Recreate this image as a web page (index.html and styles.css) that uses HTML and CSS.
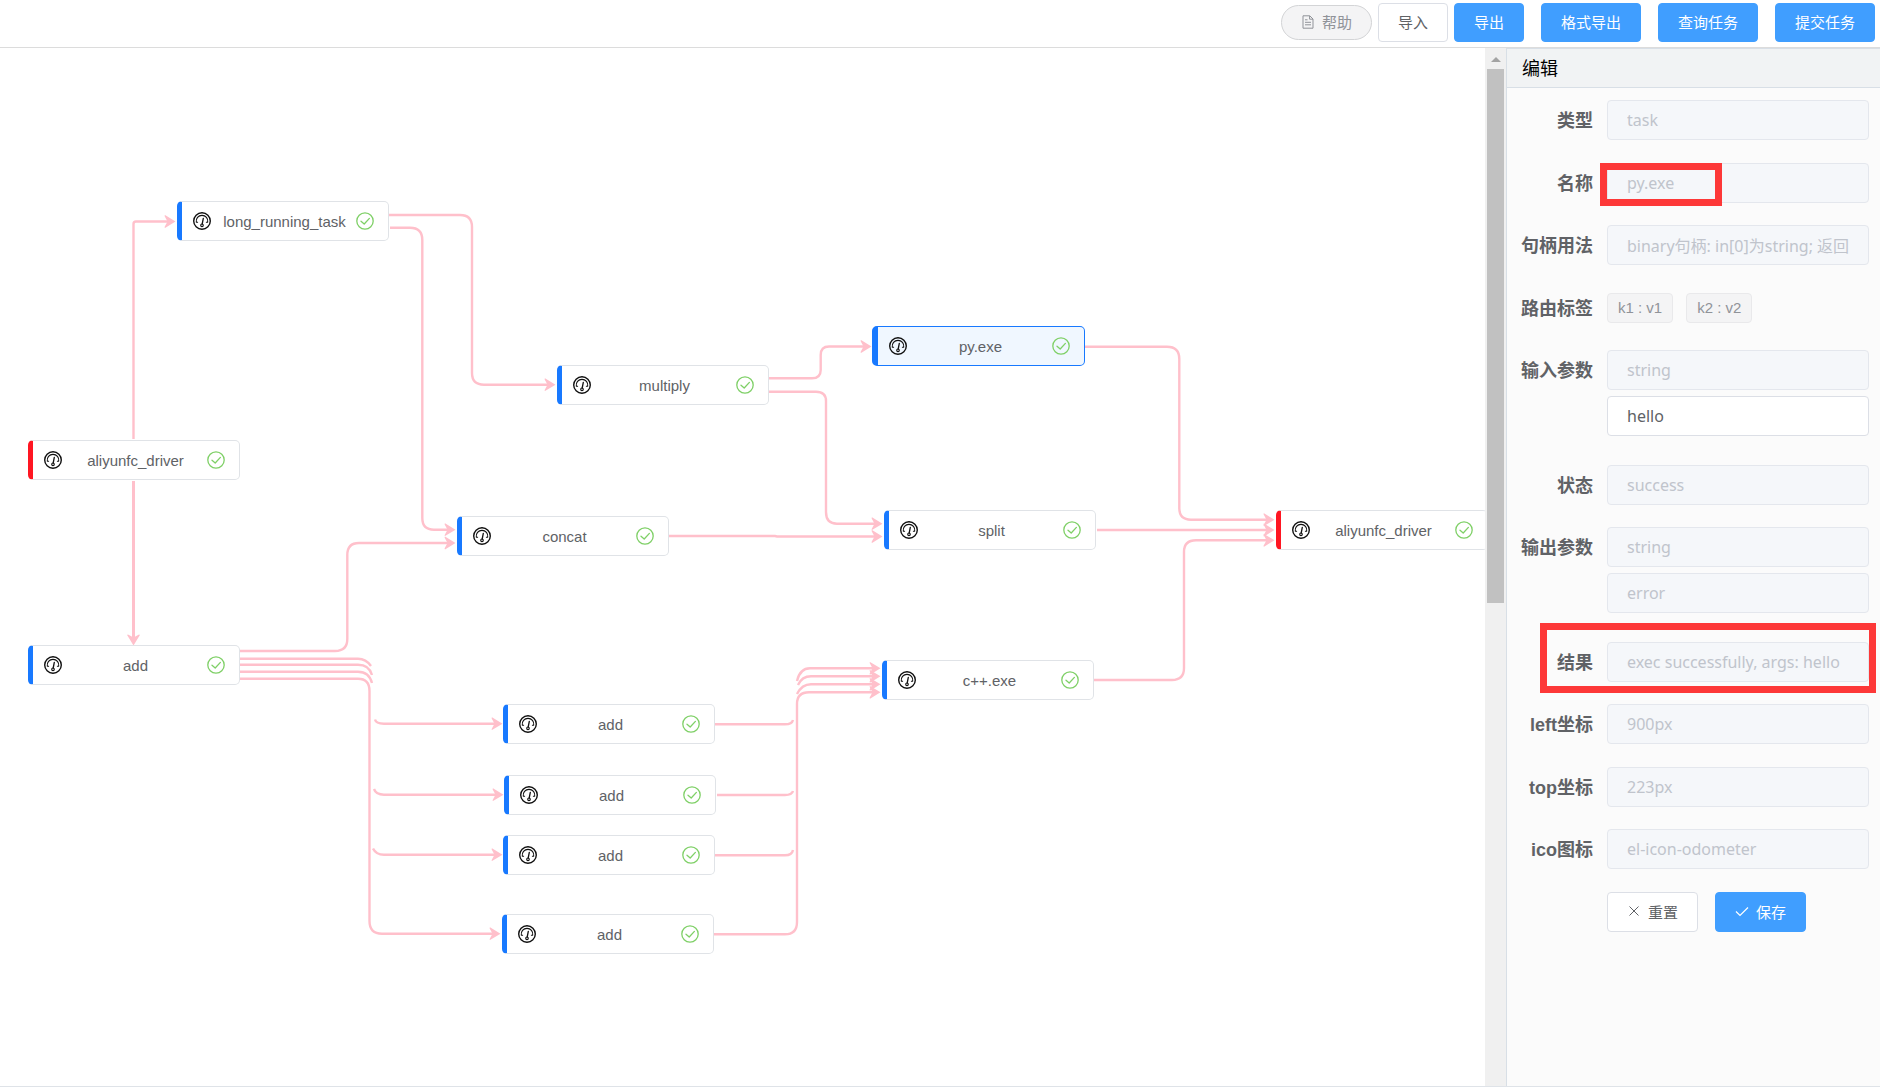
FILE: index.html
```html
<!DOCTYPE html>
<html lang="zh-CN">
<head>
<meta charset="utf-8">
<title>流程编辑</title>
<link rel="stylesheet" href="styles.css">
</head>
<body>
<svg class="defs" aria-hidden="true">
  <symbol id="odometer" viewBox="0 0 18 18">
    <g fill="none" stroke="#111" stroke-linecap="round" stroke-linejoin="round">
      <circle cx="9" cy="9" r="8.3" stroke-width="1.4"/>
      <path d="M4.6 10.2H3.3A5.8 5.8 0 1 1 14.7 10.2H13.4" stroke-width="1.1"/>
      <path d="M10.3 6.4L9.2 12" stroke-width="1.3"/>
      <circle cx="9" cy="13.3" r="1.3" stroke-width="1.1"/>
    </g>
  </symbol>
  <symbol id="done" viewBox="0 0 18 18">
    <g fill="none" stroke="#7fd067" stroke-width="1.3" stroke-linecap="round" stroke-linejoin="round">
      <circle cx="9" cy="9" r="8.2"/>
      <path d="M5 9.2L8.2 12L13.4 6.4"/>
    </g>
  </symbol>
</svg>

<header class="toolbar">
  <div class="toolbar-main">
    <button type="button" class="btn btn-help">
      <svg class="doc-icon" viewBox="0 0 14 14" fill="none" stroke="currentColor" stroke-width="1"><path d="M2 .8H8.8L12 4V13.2H2ZM8.6 1V4.2H12M4 4.8H6.5M4 7.3H10M4 9.8H10"/></svg>
      <span>帮助</span>
    </button>
    <button type="button" class="btn">导入</button>
    <button type="button" class="btn btn-primary">导出</button>
  </div>
  <button type="button" class="btn btn-primary">格式导出</button>
  <button type="button" class="btn btn-primary">查询任务</button>
  <button type="button" class="btn btn-primary">提交任务</button>
</header>

<main class="workspace">
  <section class="canvas">
    <svg class="links" aria-hidden="true">
      <defs>
        <marker id="arrow" markerUnits="userSpaceOnUse" markerWidth="12" markerHeight="14" refX="4" refY="7" orient="auto">
          <path d="M11.5 7L1 13.4Q.2 12.8 .8 12L3.5 7L.8 2Q.2 1.2 1 .6Z" fill="#ffc0cb"/>
        </marker>
      </defs>
      <g stroke-width="2.4">
        <path class="arrow" d="M133.5 391V176Q133.5 173.5 136 173.5H168"/>
        <path class="arrow" stroke-width="3" d="M133.5 433V590"/>
        <path class="arrow" d="M389 167H460Q472 167 472 179V325Q472 336.7 484 336.7H548"/>
        <path class="arrow" d="M390 179.7H410Q422.3 179.7 422.3 192V470Q422.3 481.7 434 481.7H448"/>
        <path class="arrow" d="M240 603H335Q347.3 603 347.3 591V507Q347.3 495 359 495H448"/>
        <path class="arrow" d="M769 330.3H812Q820.7 330.3 820.7 322V307Q820.7 298.5 829 298.5H864"/>
        <path class="arrow" d="M769 343.7H816Q826 343.7 826 353V464Q826 475.7 837 475.7H875"/>
        <path class="arrow" d="M669 488H775L777 488.5H875"/>
        <path class="arrow" d="M1085 298.7H1167Q1179.3 298.7 1179.3 311V460Q1179.3 471.7 1191 471.7H1267"/>
        <path class="arrow" d="M1097 482H1267"/>
        <path class="arrow" d="M1094 632H1172Q1184 632 1184 620V504Q1184 492.3 1196 492.3H1267"/>
        <path d="M240 610.7H358Q366 610.7 371 618"/>
        <path d="M240 616.7H358Q369 616.7 372 627"/>
        <path d="M240 623.7H358Q369 623.7 372 635"/>
        <path class="arrow" d="M240 630.7H358Q369.5 630.7 369.5 643V873Q369.5 885.7 382 885.7H493"/>
        <path class="arrow" d="M375 671.5Q376 675.7 384 675.7H495"/>
        <path class="arrow" d="M374 741Q376 746.7 384 746.7H496"/>
        <path class="arrow" d="M373 800.5Q376 806.7 384 806.7H495"/>
        <path d="M715 676.3H785Q792 676.3 793 672"/>
        <path d="M717 747H785Q792 747 793 743"/>
        <path d="M715 807.3H785Q792 807.3 793 802"/>
        <path class="arrow" d="M714 886.3H785Q797 886.3 797 874V656Q797 644.3 809 644.3H873"/>
        <path class="arrow" d="M797 633Q800 620.3 810 620.3H873"/>
        <path class="arrow" d="M798 637Q802 628.3 811 628.3H873"/>
        <path class="arrow" d="M797 646Q802 636.3 811 636.3H873"/>
      </g>
    </svg>

    <div class="node" style="left:177px;top:153px"><svg><use href="#odometer"/></svg><span>long_running_task</span><svg><use href="#done"/></svg></div>
    <div class="node" style="left:557px;top:317px"><svg><use href="#odometer"/></svg><span>multiply</span><svg><use href="#done"/></svg></div>
    <div class="node node-active" style="left:872px;top:278px"><svg><use href="#odometer"/></svg><span>py.exe</span><svg><use href="#done"/></svg></div>
    <div class="node node-driver" style="left:28px;top:392px"><svg><use href="#odometer"/></svg><span>aliyunfc_driver</span><svg><use href="#done"/></svg></div>
    <div class="node" style="left:457px;top:468px"><svg><use href="#odometer"/></svg><span>concat</span><svg><use href="#done"/></svg></div>
    <div class="node" style="left:884px;top:462px"><svg><use href="#odometer"/></svg><span>split</span><svg><use href="#done"/></svg></div>
    <div class="node node-driver" style="left:1276px;top:462px"><svg><use href="#odometer"/></svg><span>aliyunfc_driver</span><svg><use href="#done"/></svg></div>
    <div class="node" style="left:28px;top:597px"><svg><use href="#odometer"/></svg><span>add</span><svg><use href="#done"/></svg></div>
    <div class="node" style="left:882px;top:612px"><svg><use href="#odometer"/></svg><span>c++.exe</span><svg><use href="#done"/></svg></div>
    <div class="node" style="left:503px;top:656px"><svg><use href="#odometer"/></svg><span>add</span><svg><use href="#done"/></svg></div>
    <div class="node" style="left:504px;top:727px"><svg><use href="#odometer"/></svg><span>add</span><svg><use href="#done"/></svg></div>
    <div class="node" style="left:503px;top:787px"><svg><use href="#odometer"/></svg><span>add</span><svg><use href="#done"/></svg></div>
    <div class="node" style="left:502px;top:866px"><svg><use href="#odometer"/></svg><span>add</span><svg><use href="#done"/></svg></div>
  </section>

  <div class="scrollbar" aria-hidden="true">
    <svg class="scroll-up" viewBox="0 0 10 5"><path d="M0 5L5 0L10 5Z" fill="#a3a3a3"/></svg>
    <div class="scroll-thumb"></div>
  </div>

  <aside class="panel">
    <h2 class="panel-title">编辑</h2>
    <form class="form">
      <div class="row"><label for="type">类型</label><div class="field"><input id="type" value="task" disabled></div></div>
      <div class="row"><label for="name">名称</label><div class="field"><input id="name" value="py.exe" disabled><i class="mark mark-name"></i></div></div>
      <div class="row"><label for="usage">句柄用法</label><div class="field"><input id="usage" value="binary句柄: in[0]为string; 返回值为string" disabled></div></div>
      <div class="row"><span class="label">路由标签</span><div class="field tags"><span class="tag">k1 : v1</span><span class="tag">k2 : v2</span></div></div>
      <div class="row row-multi"><label for="in-type">输入参数</label><div class="field"><input id="in-type" value="string" disabled><input value="hello" aria-label="输入参数值"></div></div>
      <div class="row"><label for="status">状态</label><div class="field"><input id="status" value="success" disabled></div></div>
      <div class="row row-multi"><label for="out-type">输出参数</label><div class="field"><input id="out-type" value="string" disabled><input value="error" aria-label="输出参数错误" disabled></div></div>
      <div class="row"><label for="result">结果</label><div class="field"><input id="result" value="exec successfully, args: hello" disabled></div><i class="mark mark-result"></i></div>
      <div class="row"><label for="left">left坐标</label><div class="field"><input id="left" value="900px" disabled></div></div>
      <div class="row"><label for="top">top坐标</label><div class="field"><input id="top" value="223px" disabled></div></div>
      <div class="row"><label for="ico">ico图标</label><div class="field"><input id="ico" value="el-icon-odometer" disabled></div></div>
      <div class="actions">
        <button type="reset" class="btn"><svg viewBox="0 0 14 14" fill="none" stroke="currentColor"><path d="M2.5 2.5L11.5 11.5M11.5 2.5L2.5 11.5"/></svg><span>重置</span></button>
        <button type="button" class="btn btn-primary"><svg viewBox="0 0 14 14" fill="none" stroke="currentColor" stroke-width="1.2"><path d="M1 7.5L5 11.5L13 3.5"/></svg><span>保存</span></button>
      </div>
    </form>
  </aside>
</main>
</body>
</html>
```
FILE: styles.css
```css
* {
  box-sizing: border-box;
}

body {
  margin: 0;
  min-height: 100vh;
  display: flex;
  flex-direction: column;
  background: #fff;
  color: #606266;
  font-family: "Liberation Sans", "Noto Sans CJK SC", sans-serif;
  font-size: 15px;
}

.defs {
  display: none;
}

/* Toolbar */
.toolbar {
  display: flex;
  justify-content: flex-end;
  align-items: center;
  gap: 17px;
  padding: 3px 5px 5px;
  border-bottom: 1px solid #dcdcdc;
}

.toolbar-main {
  display: flex;
  align-items: center;
  gap: 6px;
}

.btn {
  display: flex;
  align-items: center;
  justify-content: center;
  height: 39px;
  padding: 0 19px 2px;
  border: 1px solid #dcdfe6;
  border-radius: 4px;
  background: #fff;
  color: #606266;
  font: inherit;
  white-space: nowrap;
}

.btn svg {
  width: 14px;
  height: 14px;
}

.btn-primary {
  border-color: #409eff;
  background: #409eff;
  color: #fff;
}

.btn-help {
  gap: 7px;
  height: 35px;
  border-color: #d3d4d6;
  border-radius: 18px;
  background: #f4f4f5;
  color: #909399;
}

/* Workspace */
.workspace {
  flex: 1;
  display: flex;
  border-bottom: 1px solid #dfe3e8;
}

.canvas {
  flex: 1;
  position: relative;
  overflow: hidden;
}

.links {
  position: absolute;
  inset: 0;
  width: 100%;
  height: 100%;
  fill: none;
  stroke: #ffc0cb;
}

.links marker path {
  stroke: none;
}

.arrow {
  marker-end: url(#arrow);
}

.node {
  position: absolute;
  display: flex;
  align-items: center;
  width: 212px;
  height: 40px;
  padding: 0 14px 0 11px;
  border: 1px solid #e0e3e7;
  border-left: 5px solid #1879ff;
  border-radius: 5px;
  background: #fff;
}

.node svg {
  width: 18px;
  height: 18px;
}

.node span {
  flex: 1;
  padding-left: 2px;
  text-align: center;
}

.node-driver {
  border-left-color: #ff1622;
}

.node-active {
  width: 213px;
  border-color: #1879ff;
  border-left-width: 6px;
  background: #f0f7ff;
}

/* Canvas scrollbar */
.scrollbar {
  display: flex;
  flex-direction: column;
  align-items: center;
  gap: 7px;
  width: 21px;
  padding-top: 9px;
  background: #f0f0f0;
}

.scroll-up {
  width: 10px;
  height: 5px;
}

.scroll-thumb {
  width: 17px;
  height: 534px;
  background: #c1c1c1;
}

/* Edit panel */
.panel {
  width: 374px;
  border-left: 1px solid #d8dfe6;
  background: #fbfbfb;
}

.panel-title {
  margin: 0;
  padding: 2px 0 0 15px;
  border-top: 1px solid #d8dfe6;
  border-bottom: 1px solid #d8dfe6;
  background: #f1f3f4;
  color: #000;
  font-size: 18px;
  font-weight: 400;
  line-height: 36px;
}

.form {
  padding: 12px 11px 12px 0;
}

.row {
  position: relative;
  display: flex;
  margin-bottom: 22px;
}

.row:nth-child(odd) {
  margin-bottom: 23px;
}

.row-multi {
  padding-bottom: 6px;
}

.row label,
.row .label {
  width: 100px;
  height: 40px;
  padding: 1px 14px 0 0;
  font-size: 18px;
  font-weight: 700;
  line-height: 40px;
  text-align: right;
  white-space: nowrap;
}

.field {
  position: relative;
  flex: 1;
  display: flex;
  flex-direction: column;
  gap: 6px;
  min-width: 0;
}

.field input {
  width: 100%;
  height: 40px;
  padding: 0 19px;
  border: 1px solid #dcdfe6;
  border-radius: 4px;
  background: #fff;
  color: #606266;
  font-family: "Noto Sans", "Noto Sans CJK SC", sans-serif;
  font-size: 16px;
}

.field input:disabled {
  border-color: #e4e7ed;
  background: #f5f7fa;
  color: #c0c4cc;
}

.tags {
  flex-direction: row;
  align-items: center;
  gap: 13px;
}

.tag {
  padding: 0 10px;
  border: 1px solid #e9e9eb;
  border-radius: 4px;
  background: #f4f4f5;
  color: #909399;
  line-height: 28px;
}

.actions {
  display: flex;
  gap: 17px;
  padding-left: 100px;
}

.actions .btn {
  gap: 7px;
  height: 40px;
}

/* Red annotation frames */
.mark {
  position: absolute;
  border: 7px solid #fd3838;
  pointer-events: none;
}

.mark-name {
  top: 0;
  left: -7px;
  width: 122px;
  height: 43px;
}

.mark-result {
  top: -19px;
  left: 33px;
  right: -7px;
  height: 70px;
}
```
